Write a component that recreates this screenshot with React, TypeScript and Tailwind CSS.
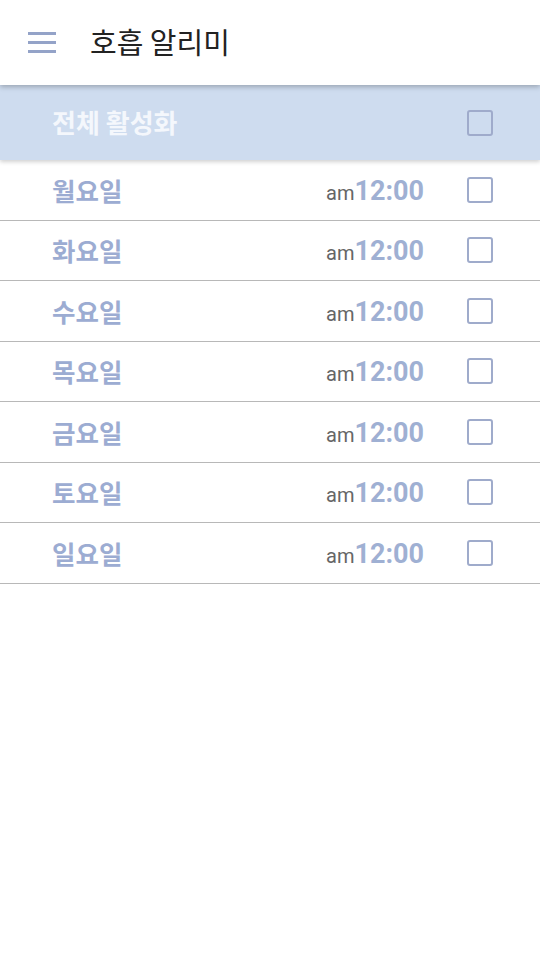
import React from "react";

const days = ["월요일", "화요일", "수요일", "목요일", "금요일", "토요일", "일요일"];

function Box() {
  return <div className="w-[26px] h-[26px] rounded-[3px] border-2 border-[#9fabcb]" />;
}

export default function App() {
  return (
    <div
      className="w-[540px] h-[960px] bg-white relative overflow-hidden"
      style={{ fontFamily: "Roboto, 'Noto Sans CJK KR', sans-serif" }}
    >
      <header className="relative z-20 h-[85px] bg-white flex items-center shadow-[0_2px_5px_rgba(0,0,0,0.25)]">
        <div className="ml-[28px] w-[28px] flex flex-col gap-[6px]">
          <div className="h-[3px] bg-[#94a3c8]" />
          <div className="h-[3px] bg-[#94a3c8]" />
          <div className="h-[3px] bg-[#94a3c8]" />
        </div>
        <div
          className="ml-[34px] text-[29px] text-[#222] leading-none pb-[2px]"
          style={{ fontFamily: "'Noto Sans CJK KR', sans-serif" }}
        >
          호흡 알리미
        </div>
      </header>
      <div className="relative z-10 h-[75px] bg-[#cedcef] flex items-center pl-[52px] pr-[47px] shadow-[0_2px_4px_rgba(0,0,0,0.18)]">
        <div
          className="flex-1 text-[26px] font-bold text-[#f4f7fc] leading-none pb-[2px]"
          style={{ fontFamily: "'Noto Sans CJK KR', sans-serif" }}
        >
          전체 활성화
        </div>
        <Box />
      </div>
      <div className="flex flex-col">
        {days.map((d) => (
          <div
            key={d}
            className="h-[60.5px] border-b border-[#b8b8b8] flex items-center pl-[52px] pr-[47px]"
          >
            <div
              className="flex-1 text-[25.5px] font-bold text-[#9cacd2] leading-none pb-[1px]"
              style={{ fontFamily: "'Noto Sans CJK KR', sans-serif" }}
            >
              {d}
            </div>
            <div className="flex items-baseline mr-[43px] pt-[2px]">
              <span className="text-[20px] text-[#666]">am</span>
              <span className="text-[27px] font-bold text-[#9fb0d3]">12:00</span>
            </div>
            <Box />
          </div>
        ))}
      </div>
    </div>
  );
}
